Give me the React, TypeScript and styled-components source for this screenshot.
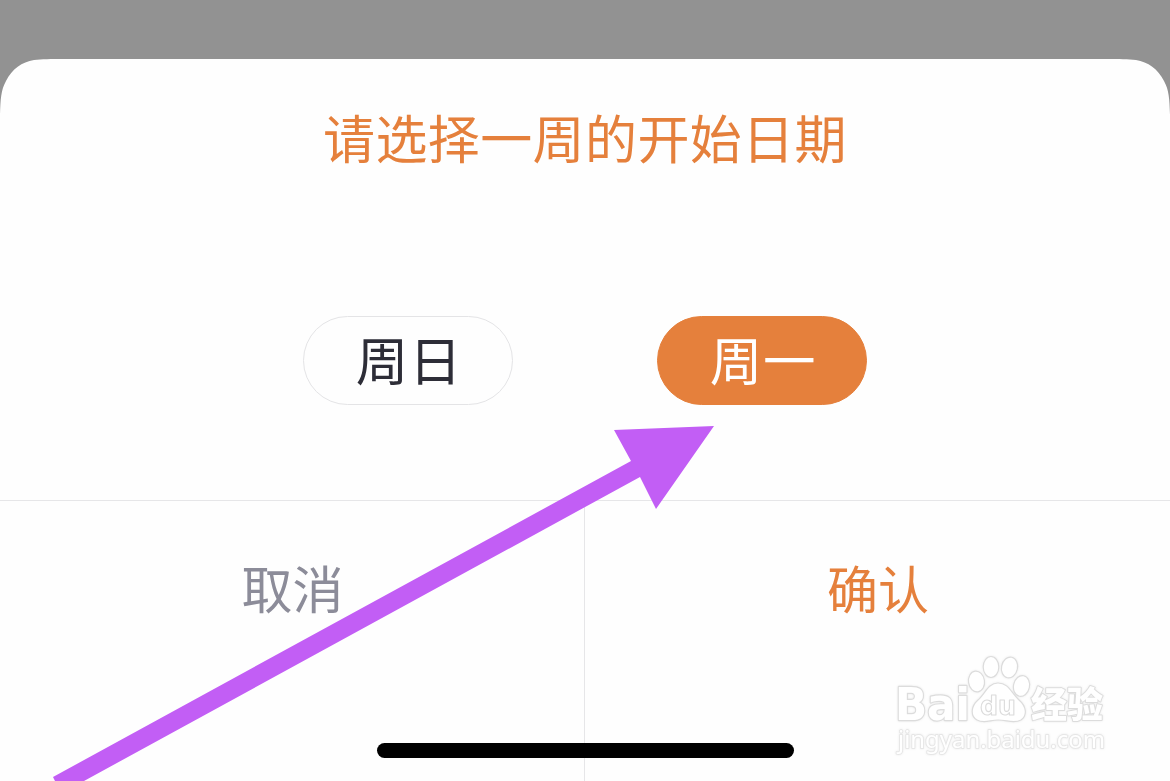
import React from "react";
import styled, { createGlobalStyle } from "styled-components";

const GlobalStyle = createGlobalStyle`
  * { box-sizing: border-box; }
  body {
    margin: 0;
    background: #929292;
    font-family: "Noto Sans CJK SC", sans-serif;
    overflow: hidden;
  }
`;

const Screen = styled.main`
  position: relative;
  width: 1170px;
  height: 781px;
  padding-top: 59px;
  background: #929292;
  overflow: hidden;
`;

const Sheet = styled.section`
  display: flex;
  flex-direction: column;
  height: 722px;
  background: #fefefe;
  clip-path: path("M0 722 V56 C0.500 40 1 31 6 22 C12 10 22 3 34 1 C42 0 50 0 66 0 H1104 C1120 0 1128 0 1136 1 C1148 3 1158 10 1164 22 C1169 31 1169.500 40 1170 56 V722 Z");
`;

const Title = styled.h1`
  margin: 41px 0 0;
  height: 74px;
  line-height: 74px;
  text-align: center;
  font-size: 52px;
  font-weight: 400;
  letter-spacing: 0.4px;
  color: #e5803c;
`;

const Choices = styled.div`
  display: flex;
  justify-content: center;
  gap: 144px;
  margin-top: 142px;
`;

const Choice = styled.button<{ $selected?: boolean }>`
  width: 210px;
  height: 89px;
  padding: 0 0 5px 2px;
  border: 1px solid ${(p) => (p.$selected ? "#e5803c" : "#e4e4e6")};
  border-radius: 45px;
  background: ${(p) => (p.$selected ? "#e5803c" : "#fefefe")};
  color: ${(p) => (p.$selected ? "#fff" : "#2d2d37")};
  font-family: inherit;
  font-size: 52.5px;
  line-height: 82px;
  letter-spacing: 0.8px;
`;

const Actions = styled.footer`
  display: flex;
  flex: 1;
  margin-top: 95px;
  border-top: 1px solid #e6e6e8;
`;

const Action = styled.button<{ $primary?: boolean }>`
  width: 585px;
  padding: 49px 0 0 1px;
  display: flex;
  align-items: flex-start;
  justify-content: center;
  border: 0;
  border-right: ${(p) => (p.$primary ? "0" : "1px solid #e6e6e8")};
  background: transparent;
  color: ${(p) => (p.$primary ? "#e5803c" : "#8c8c99")};
  font-family: inherit;
  font-size: 51px;
  line-height: 74px;
`;

const HomeIndicator = styled.div`
  position: absolute;
  left: 377px;
  top: 743px;
  width: 417px;
  height: 15px;
  border-radius: 8px;
  background: #000;
`;

const Overlay = styled.svg`
  position: absolute;
  inset: 0;
  pointer-events: none;
`;

const Watermark = styled.svg`
  position: absolute;
  left: 890px;
  top: 650px;
  filter: drop-shadow(0 0 1px rgba(0, 0, 0, 0.08));
`;

export default function App() {
  return (
    <Screen>
      <GlobalStyle />
      <Sheet>
        <Title>请选择一周的开始日期</Title>
        <Choices>
          <Choice>周日</Choice>
          <Choice $selected>周一</Choice>
        </Choices>
        <Actions>
          <Action>取消</Action>
          <Action $primary>确认</Action>
        </Actions>
      </Sheet>
      <Overlay width="1170" height="781" viewBox="0 0 1170 781">
        <path d="M53 777 L631 461 L614 430 L714 426 L656 509 L640 477 L84 781 L55 781 Z" fill="#c25ef5" />
      </Overlay>
      <HomeIndicator />
      <Watermark width="230" height="115" viewBox="0 0 230 115">
        <g fill="#fff" stroke="#dcdcdc" strokeWidth="1.2" strokeLinejoin="round">
          <ellipse cx="86.500" cy="31.500" rx="8" ry="10.500" transform="rotate(-8 86.500 31.500)" />
          <ellipse cx="101" cy="17" rx="7.800" ry="10.500" />
          <ellipse cx="119.500" cy="17.500" rx="8" ry="10.500" transform="rotate(12 119.500 17.500)" />
          <ellipse cx="131.500" cy="36" rx="8" ry="10.500" transform="rotate(12 131.500 36)" />
          <path d="M108 33 C98 33 95 44 88 50 C81 56 80 66 87 70 C94 74 100 70 108 70 C117 70 124 74 131 70 C138 65 136 56 129 50 C121 43 119 33 108 33 Z" />
          <text x="5" y="70" fontSize="45" fontWeight="700" fontFamily="DejaVu Sans, sans-serif" strokeWidth="2.4" paintOrder="stroke" textLength="75" lengthAdjust="spacingAndGlyphs">Bai</text>
          <text x="90" y="65" fontSize="27" fontWeight="700" fontFamily="DejaVu Sans, sans-serif" textLength="36" lengthAdjust="spacingAndGlyphs">du</text>
          <text x="141" y="68" fontSize="36" fontWeight="900" fontFamily="Noto Sans CJK SC, sans-serif" strokeWidth="2" paintOrder="stroke" textLength="72">经验</text>
          <text x="8" y="98" fontSize="23" fontFamily="Noto Sans, sans-serif" strokeWidth="1.8" stroke="#e6e6e6" paintOrder="stroke" textLength="207" lengthAdjust="spacingAndGlyphs">jingyan.baidu.com</text>
        </g>
      </Watermark>
    </Screen>
  );
}
